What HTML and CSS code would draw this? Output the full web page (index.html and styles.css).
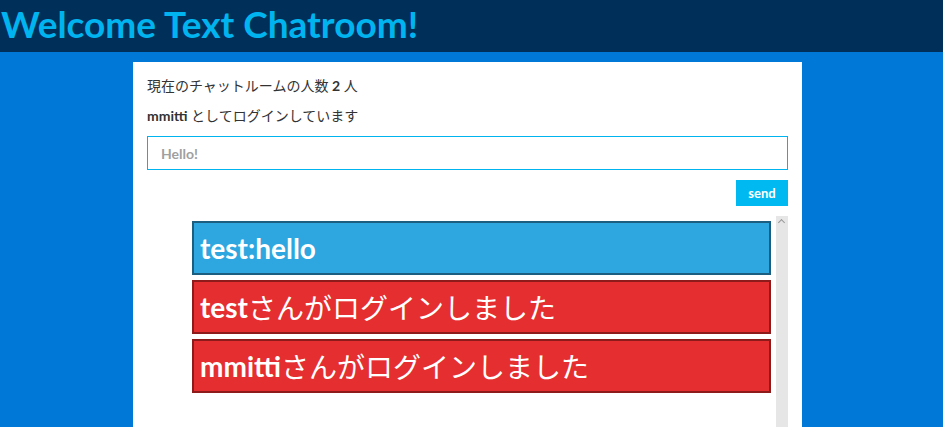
FILE: index.html
```html
<!DOCTYPE html>
<html lang="ja">
<head>
<meta charset="utf-8">
<title>Welcome Text Chatroom!</title>
<link rel="stylesheet" href="styles.css">
</head>
<body>
<header class="topbar">
  <h1 class="title">Welcome Text Chatroom!</h1>
</header>
<main class="panel">
  <p class="info">現在のチャットルームの人数 <b>2</b> 人</p>
  <p class="info"><b>mmitti</b> としてログインしています</p>
  <input class="msg-input" type="text" placeholder="Hello!">
  <div class="actions"><button class="send">send</button></div>
  <div class="log">
    <ul class="messages">
      <li class="msg msg-chat"><b>test:hello</b></li>
      <li class="msg msg-sys"><b>test</b>さんがログインしました</li>
      <li class="msg msg-sys"><b>mmitti</b>さんがログインしました</li>
    </ul>
    <div class="scrollbar"><span class="arrow"></span></div>
  </div>
</main>
</body>
</html>
```
FILE: styles.css
```css
html, body {
  margin: 0;
  height: 100%;
  overflow: hidden;
}
body {
  background: #0078d7;
  font-family: "Lato", "Noto Sans CJK JP", sans-serif;
  color: #333;
}
.topbar {
  background: #00305a;
  height: 52px;
}
.title {
  margin: 0;
  padding-left: 1px;
  font-size: 37px;
  line-height: 48px;
  font-weight: 700;
  color: #00b4f0;
}
.panel {
  background: #fff;
  width: 641px;
  margin: 10px 0 0 133px;
  padding: 14px 14px 0;
  height: 600px;
}
.info {
  margin: 0 0 10px;
  font-size: 14px;
  line-height: 20px;
}
.info b { font-weight: 700; }
.msg-input {
  display: block;
  box-sizing: border-box;
  width: 641px;
  height: 34px;
  margin-top: 0;
  border: 1px solid #00b4f0;
  padding: 0 13px;
  font-family: inherit;
  font-size: 14px;
  font-weight: 700;
  outline: none;
}
.msg-input::placeholder { color: #a0a0a0; }
.actions {
  display: flex;
  justify-content: flex-end;
  margin-top: 10px;
}
.send {
  width: 52px;
  height: 26px;
  border: none;
  background: #00b9f1;
  color: #fff;
  font-family: inherit;
  font-size: 13px;
  font-weight: 700;
  padding: 0;
}
.log {
  display: flex;
  margin-top: 10px;
  height: 400px;
}
.messages {
  list-style: none;
  margin: 0;
  padding: 0 0 0 40px;
  flex: 1;
}
.msg {
  margin: 5px;
  height: 54px;
  box-sizing: border-box;
  border: 2px solid;
  padding: 0 6px;
  display: flex;
  align-items: center;
  font-size: 28px;
  color: #fff;
  font-weight: 400;
}
.msg b { font-weight: 700; }
.msg-chat {
  background: #2ea7e0;
  border-color: #1b5e80;
}
.msg-sys {
  background: #e52e2f;
  border-color: #8e1b1c;
}
.scrollbar {
  width: 12px;
  background: #e6e6e6;
  position: relative;
}
.arrow {
  position: absolute;
  top: 4px;
  left: 3px;
  width: 4px;
  height: 4px;
  border-left: 1px solid #999;
  border-top: 1px solid #999;
  transform: rotate(45deg);
}
```
